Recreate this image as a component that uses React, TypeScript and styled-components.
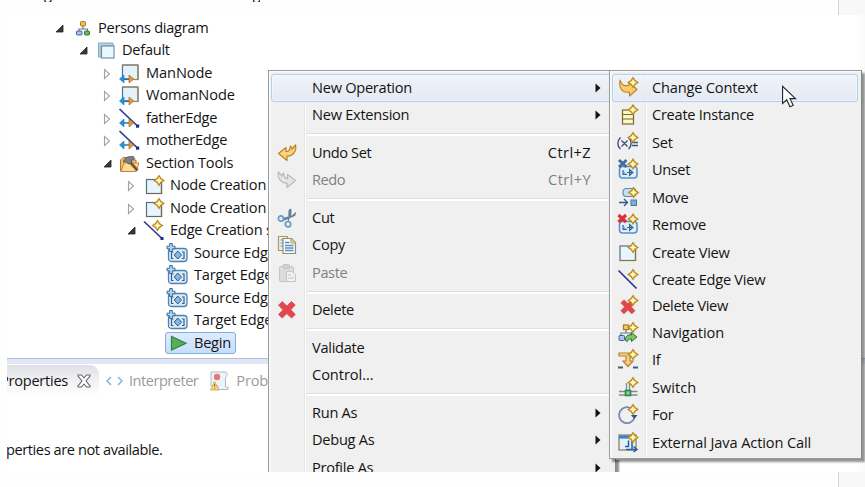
import React from "react";
import styled, { createGlobalStyle, css } from "styled-components";

const Global = createGlobalStyle`
  * { box-sizing: border-box; }
  body { margin: 0; background: #fefefe; overflow: hidden; }
`;

const Page = styled.div`
  position: relative;
  width: 865px;
  height: 487px;
  overflow: hidden;
  background: #fefefe;
  color: #141414;
  font: 14.6px/22px "Open Sans", "Noto Sans", sans-serif;
  letter-spacing: -0.27px;
  white-space: nowrap;
  display: flex;
  flex-direction: column;
`;

const Strip = styled.div`
  flex: none;
  height: 15px;
  display: flex;
  justify-content: space-between;
  overflow: hidden;
`;
const Caption = styled.div`
  display: flex;
  gap: 201px;
  height: 2px;
  overflow: hidden;
  padding-left: 44px;
  line-height: 20px;
  span { margin-top: -17px; }
`;
const Margin = styled.div`
  width: 27px;
  border-left: 1px solid #d4d4d4;
  background: #f8f8f8;
`;

const Shot = styled.div`
  flex: none;
  height: 457px;
  margin-left: 7px;
  display: flex;
  flex-direction: column;
  overflow: hidden;
  background: linear-gradient(to right, #fff 850px, #f9f9f9 858px);
`;

const Tree = styled.div`
  height: 343px;
  padding-top: 1.25px;
`;
const TreeRow = styled.div<{ $level: number }>`
  height: 22.5px;
  padding-left: ${(p) => 48 + p.$level * 24}px;
  display: flex;
  align-items: center;
`;
const Twisty = styled.svg`
  width: 10px;
  height: 22px;
  flex: none;
  margin-right: 5px;
  overflow: visible;
`;
const TreeIcon = styled.svg`
  width: 25px;
  height: 22px;
  flex: none;
  overflow: visible;
`;
const TreeText = styled.span<{ $ls?: number }>`
  margin: 0 0 2px 3px;
  letter-spacing: ${(p) => p.$ls ?? -0.27}px;
`;
const Selected = styled.div`
  display: flex;
  align-items: center;
  height: 22px;
  width: 71px;
  margin-left: -1px;
  border: 1px solid #84acdd;
  border-radius: 3px;
  background: linear-gradient(#deebfd, #c6defc);
`;

const TabBar = styled.div`
  flex: none;
  height: 39px;
  border-top: 1px solid #b4bdd6;
  box-shadow: inset 0 5px #e1e6f6;
  padding-top: 6px;
  display: flex;
`;
const TabText = styled.span`
  margin-bottom: 2px;
`;
const ActiveTab = styled.div`
  width: 92px;
  flex: none;
  height: 32px;
  padding: 0 8px 0 0;
  display: flex;
  align-items: center;
  justify-content: flex-end;
  gap: 9px;
  border-top-right-radius: 9px;
  background: linear-gradient(#dfe0e5, #f2f2f4 50%, #fff);
  svg { flex: none; }
`;
const Tab = styled.div<{ $left: number; $gap: number; $ls: number }>`
  height: 32px;
  margin-left: ${(p) => p.$left}px;
  display: flex;
  align-items: center;
  gap: ${(p) => p.$gap}px;
  color: #9b9b9b;
  letter-spacing: ${(p) => p.$ls}px;
  svg { flex: none; }
`;
const PaneText = styled.div`
  margin: 41px 0 0 -1px;
  letter-spacing: -0.42px;
`;

const MenuLayer = styled.div<{ $x: number; $w: number; $h: number; $shadow?: boolean }>`
  position: absolute;
  left: ${(p) => p.$x}px;
  top: 70px;
  width: ${(p) => p.$w}px;
  height: ${(p) => p.$h}px;
  overflow: hidden;
  padding: 3px 3px 0 2px;
  border: 1px solid #9c9c9c;
  ${(p) => !p.$shadow && css`border-bottom: none;`}
  border-right-color: #858585;
  background: linear-gradient(to right, #f7f7f7 2px, #f0f0f0 2px, #f0f0f0 35px, #e4e4e4 35px, #e4e4e4 36px, #fcfcfc 36px, #fcfcfc 37px, #f0f0f0 37px);
  box-shadow: inset 1px 1px #fafafa ${(p) => p.$shadow ? ", 3px 3px 2px rgba(0,0,0,.42)" : ""};
`;
const MenuShade = styled.div`
  position: absolute;
  left: 615px;
  top: 460px;
  width: 5px;
  height: 12px;
  background: linear-gradient(to right, #858585, #9a9a9a 60%, #ededed);
`;
const MenuRow = styled.div<{ $h?: number; $hot?: boolean; $off?: boolean }>`
  height: ${(p) => p.$h ?? 27.5}px;
  padding: 0 10px 0 4.5px;
  display: flex;
  align-items: center;
  border: 1px solid transparent;
  border-radius: 3px;
  color: ${(p) => (p.$off ? "#808080" : "#141414")};
  ${(p) => p.$hot && css`
    border-color: #aecff7;
    background: linear-gradient(rgba(240,243,248,.85), rgba(226,233,244,.85));
    box-shadow: inset 0 0 0 1px rgba(255,255,255,.45);
  `}
`;
const MenuIcon = styled.svg`
  width: 20px;
  height: 20px;
  flex: none;
  overflow: visible;
`;
const MenuText = styled.span<{ $ls?: number; $indent: number }>`
  flex: 1;
  margin: 0 0 2px ${(p) => p.$indent}px;
  letter-spacing: ${(p) => p.$ls ?? -0.27}px;
`;
const Shortcut = styled.span`
  margin: 0 10px 2px 0;
  letter-spacing: 0.4px;
`;
const Rule = styled.div`
  height: 10px;
  margin-left: 36px;
  padding-top: 4px;
  &::before {
    content: "";
    display: block;
    height: 2px;
    border-top: 1px solid #dedede;
    background: #fff;
  }
`;
const SubArrow = styled.svg`
  width: 6px;
  height: 10px;
  flex: none;
`;
const Pointer = styled.svg`
  position: absolute;
  left: 781px;
  top: 85px;
  width: 17px;
  height: 24px;
`;

const Star = ({ x, y }: { x: number; y: number }) => (
  <g transform={`translate(${x} ${y})`}>
    <path d="M0-4.800 1.900-1.900 4.800 0 1.900 1.900 0 4.800-1.900 1.900-4.800 0-1.900-1.900Z" fill="#fbe38a" stroke="#b98a1c" strokeWidth="1.300" />
    <path d="M0-2.200V2.200M-2.200 0H2.200" stroke="#fffbe0" strokeWidth="1" />
  </g>
);
const Link = ({ y }: { y: number }) => (
  <g transform={`translate(0 ${y})`}>
    <path d="M4 0H14" stroke="#3d6284" strokeWidth="1.4" />
    <path d="M6-4V4L1.5 0Z" fill="#1899de" stroke="#1478b8" strokeWidth=".6" />
    <path d="M11-4V4L15.8 0Z" fill="#e39a3c" stroke="#a96a20" strokeWidth=".7" />
  </g>
);
const CrossMark = () => (
  <path d="M5.2 1.6 9.8 6 14.4 1.6 18.2 5 13.8 9.8 18.2 14.4 14.6 18 9.8 13.6 5.2 18 1.6 14.4 6 9.8 1.6 5.2Z" fill="#e4474b" stroke="#d2555a" strokeWidth="1" strokeLinejoin="round" />
);

const treeIcons: Record<string, React.ReactNode> = {
  diagram: (
    <g>
      <path d="M13 8V12M9 15V12H17.500V15" fill="none" stroke="#6b7684" strokeWidth="1.1" />
      <rect x="10.500" y="4.500" width="5" height="4.500" rx="1" fill="#f3bd4a" stroke="#a87a18" />
      <rect x="6.500" y="14" width="5.500" height="4" rx="1" fill="#a9c4ee" stroke="#3f5f9e" />
      <rect x="14.500" y="14" width="5" height="4" rx="1" fill="#6cba62" stroke="#2b7738" />
    </g>
  ),
  layer: (
    <g>
      <path d="M4.500 4H19V7H7V18H4.500Z" fill="#b9d3e4" stroke="#8da9bb" />
      <rect x="7.500" y="7" width="12.500" height="12" fill="#eaf8fd" stroke="#6f93ad" strokeWidth="1.200" />
    </g>
  ),
  node: (
    <g>
      <rect x="4.500" y="3" width="15.500" height="14.500" fill="#e4f2fa" stroke="#55718c" strokeWidth="1.200" />
      <path d="M20 3V17.500H14M4.500 3H20" fill="none" stroke="#9d8b55" strokeWidth="1.200" />
      <Link y={17} />
    </g>
  ),
  edge: (
    <g>
      <path d="M1.500 2 20 19.500" stroke="#26389c" strokeWidth="1.700" />
      <rect x="18" y="17.500" width="3.200" height="3.200" fill="#1e2f88" />
      <Link y={16} />
    </g>
  ),
  tools: (
    <g>
      <path d="M2.500 19V8L5 5.500H9L11 8H18V19Z" fill="#f2bd67" stroke="#b9762a" />
      <path d="M3 19.500 6 11H21L18 19.500Z" fill="#ffdc94" stroke="#c1843a" />
      <path d="M11.500 9.500 19.500 18.500" stroke="#7c5638" strokeWidth="2.800" />
      <path d="M5.500 10C6 6 9.500 4 15.500 4.500L16.500 7 13.500 8 13.500 11 10.500 12 8.500 9.500Z" fill="#7b8084" stroke="#4c5155" strokeWidth=".8" />
    </g>
  ),
  create: (
    <g>
      <rect x="4.500" y="5.500" width="15" height="14" fill="#e8f5fc" stroke="#576f84" strokeWidth="1.200" />
      <path d="M19.500 6V19.500H5" fill="none" stroke="#6e684e" strokeWidth="1.200" />
      <Star x={17} y={6.500} />
    </g>
  ),
  createEdge: (
    <g>
      <path d="M2 2.500 20 19.500" stroke="#26389c" strokeWidth="1.600" />
      <rect x="18.500" y="18" width="3" height="3" fill="#1e2f88" />
      <Star x={15.500} y={6.500} />
    </g>
  ),
  variable: (
    <g>
      <rect x="2.500" y="6.500" width="18.500" height="13" rx="3" fill="#dcebf8" stroke="#4b83b8" strokeWidth="1.300" />
      <path d="M7.500 10H5.500V16.500H7.500M16 10H18V16.500H16" fill="none" stroke="#3a5f86" strokeWidth="1.200" />
      <path d="M11.800 9 15.500 13 11.800 17 8.200 13Z" fill="#86b7dd" stroke="#2f5f91" />
      <path d="M3.700 1.500H6.300V4.200H9V6.800H6.300V9.500H3.700V6.800H1V4.200H3.700Z" fill="#b6d8ee" stroke="#386d99" />
    </g>
  ),
  begin: <path d="M5.500 4.500V18L20 11.300Z" fill="#55ae58" stroke="#2f8045" strokeWidth="1.200" />,
};

const menuIcons: Record<string, React.ReactNode> = {
  undo: <path d="M18.500 2C20 8 16 13.500 10 13V17.500L1.500 10.500 9 4.500V8.500C13.500 9 13 4 13.500 3L15 6Z" fill="#fbd27b" stroke="#bb8225" strokeWidth="1.200" strokeLinejoin="round" />,
  redo: <path d="M1.500 2C0 8 4 13.500 10 13V17.500L18.500 10.500 10.500 4.500V8.500C6.500 9 7 4 6.500 3L5 6Z" fill="#e4e4e4" stroke="#bababa" strokeWidth="1.200" strokeLinejoin="round" />,
  cut: (
    <g fill="none">
      <path d="M11.500 13 12 2 14 1V9L18.500 4.500 18 7.500 8 12 5.500 10.500 11 9Z" fill="#71839c" stroke="#5b6f8b" strokeWidth=".7" />
      <circle cx="4" cy="10.500" r="2.700" stroke="#5f9bcd" strokeWidth="1.700" />
      <circle cx="11" cy="16.200" r="2.700" stroke="#5f9bcd" strokeWidth="1.700" />
    </g>
  ),
  copy: (
    <g>
      <path d="M1.500 1.500H10.500V15.500H1.500Z" fill="#e8eff4" stroke="#b59a55" strokeWidth="1.200" />
      <path d="M3.500 5H6M3.500 8H6M3.500 11H6" stroke="#6a94bd" strokeWidth="1.200" />
      <path d="M6 3.500H14.500L18.500 7.500V18.500H6Z" fill="#f5fafc" stroke="#8a8f7a" strokeWidth="1.200" />
      <path d="M14 3.500V8H18.500" fill="#f0d58c" stroke="#b59a55" />
      <path d="M8 7.500H12.500M8 10.500H16.500M8 13H16.500M8 15.500H16.500" stroke="#5f8fc0" strokeWidth="1.300" />
    </g>
  ),
  paste: (
    <g fill="#dcdcdc" stroke="#c5c5c5">
      <rect x="2.500" y="3.500" width="14" height="15" rx="1.500" />
      <rect x="6" y="1.500" width="6.500" height="4" rx="1" fill="#d0d0d0" />
      <path d="M9.500 8.500H15L18.500 12V18.500H9.500Z" fill="#f1f1f1" />
      <path d="M11 12H14M11 15H17" />
    </g>
  ),
  del: <CrossMark />,
  context: (
    <g>
      <path d="M2 2C4 8 6 8 11 7.500V4L19 11.500 11.500 18V14C5 15.500 .5 11 2 2Z" fill="#f9cd6a" stroke="#bb8225" strokeWidth="1.100" strokeLinejoin="round" />
      <Star x={15} y={4.500} />
    </g>
  ),
  instance: (
    <g>
      <rect x="4.500" y="5" width="11" height="14" fill="#fbf7c8" stroke="#75692f" strokeWidth="1.200" />
      <path d="M4.500 9.500H15.500M4.500 14H15.500" stroke="#75692f" strokeWidth="1.200" />
      <Star x={15} y={4.800} />
    </g>
  ),
  set: (
    <g fill="none" stroke="#3d5273" strokeWidth="1.400">
      <path d="M2.500 4.500C-1 8-1 13 2.500 16M10.500 4.500C14 8 14 13 10.500 16M3.500 7.500 9.500 13.500M9.500 7.500 3.500 13.500M14 9.500H20M14 12.500H20" />
      <Star x={15} y={4.500} />
    </g>
  ),
  unset: (
    <g>
      <rect x="1.500" y="6.500" width="17.500" height="11.500" rx="3" fill="#e2eef9" stroke="#5790c5" strokeWidth="1.500" />
      <path d="M5 10V14.500H9M9 12.500H14M11.500 9.500 15 12.500 11.500 15.500Z" fill="#8bb7df" stroke="#376695" strokeWidth="1.100" />
      <path d="M1 0 8.500 7M8.500 0 1 7" stroke="#3e6f9e" strokeWidth="3" />
      <Star x={15} y={4} />
    </g>
  ),
  move: (
    <g>
      <rect x="5" y=".5" width="13" height="8" rx="3.500" fill="#c8dff2" stroke="#5c86b6" strokeWidth="1.200" />
      <path d="M1 14.500H9M6 11 9.500 14.500 6 18" fill="none" stroke="#355890" strokeWidth="1.300" />
      <rect x="13" y="12" width="5.500" height="5.500" fill="#7faed0" stroke="#467da8" />
      <Star x={15.500} y={4.500} />
    </g>
  ),
  remove: (
    <g>
      <rect x="1.500" y="6.500" width="17.500" height="11.500" rx="3" fill="#e2eef9" stroke="#5790c5" strokeWidth="1.500" />
      <path d="M5 10V14.500H9M9 12.500H14M11.500 9.500 15 12.500 11.500 15.500Z" fill="#8bb7df" stroke="#376695" strokeWidth="1.100" />
      <path d="M.5 0 8 7M8 0 .5 7" stroke="#dc3038" strokeWidth="3.200" />
      <Star x={15} y={4} />
    </g>
  ),
  view: (
    <g>
      <rect x="2" y="3" width="15.500" height="14.500" fill="#e8f5fc" stroke="#576f84" strokeWidth="1.200" />
      <path d="M17.500 4V17.500H2" fill="none" stroke="#857442" strokeWidth="1.200" />
      <Star x={15} y={4.500} />
    </g>
  ),
  edgeView: (
    <g>
      <path d="M.5 .5 18.500 18.500" stroke="#26389c" strokeWidth="1.700" />
      <Star x={15} y={4.500} />
    </g>
  ),
  delView: (
    <g>
      <g transform="translate(1.500 2.500) scale(.85)"><CrossMark /></g>
      <Star x={15} y={4.500} />
    </g>
  ),
  navigation: (
    <g>
      <path d="M8 6V10M3 13V10H13V13" fill="none" stroke="#6b7684" strokeWidth="1.200" />
      <rect x="5.500" y="2" width="5" height="4.500" fill="#f6cf6c" stroke="#a87a18" strokeWidth="1.200" />
      <rect x="1" y="12.500" width="5.500" height="5" rx="1" fill="#a9c4ee" stroke="#3f5f9e" />
      <path d="M7.500 17.500C7 13 10 11.500 13.500 12V9.500L19 14 13.500 18.500V16C10.500 16 10 17 9.500 18.500Z" fill="#7cc667" stroke="#2b7738" />
      <Star x={15} y={4.500} />
    </g>
  ),
  iff: (
    <g>
      <path d="M1 3H12V11H15L10 16.500 5 11H8V6H1Z" fill="#f6d085" stroke="#b9812e" strokeWidth="1.200" />
      <path d="M0 17.500H5M15 17.500H20" stroke="#3f5f85" strokeWidth="2" />
      <Star x={15} y={4.500} />
    </g>
  ),
  switcher: (
    <g>
      <path d="M1 13.500H19.500M1 17H19.500M8.500 5V13M11.500 5V13" stroke="#818a8c" strokeWidth="1.300" />
      <rect x="7.500" y="12.500" width="5" height="5" fill="#8bd092" stroke="#28884a" strokeWidth="1.600" />
      <Star x={15} y={4.500} />
    </g>
  ),
  loop: (
    <g>
      <path d="M13.500 3.500A8 8 0 1 0 16.500 13" fill="none" stroke="#7889b0" strokeWidth="1.800" />
      <path d="M13 10H19.500L16.300 14Z" fill="#384f85" />
      <Star x={15} y={4.500} />
    </g>
  ),
  java: (
    <g>
      <rect x="1" y="2" width="17" height="15" fill="#e1f1fb" stroke="#8b7b4b" strokeWidth="1.200" />
      <path d="M1 4H18" stroke="#3b82cc" strokeWidth="3.200" />
      <path d="M10.500 7.500V13.500H7M14 8V16M8 16.500H18M15.500 13.500 19 16.500 15.500 19" fill="none" stroke="#315aa0" strokeWidth="1.500" />
      <Star x={15} y={4.500} />
    </g>
  ),
};

type TreeItem = { level: number; text: string; icon: string; state?: "open" | "closed"; selected?: boolean; ls?: number };
const tree: TreeItem[] = [
  { level: 0, text: "Persons diagram", icon: "diagram", state: "open" },
  { level: 1, text: "Default", icon: "layer", state: "open", ls: -0.27 },
  { level: 2, text: "ManNode", icon: "node", state: "closed", ls: -0.1 },
  { level: 2, text: "WomanNode", icon: "node", state: "closed", ls: -0.1 },
  { level: 2, text: "fatherEdge", icon: "edge", state: "closed", ls: -0.35 },
  { level: 2, text: "motherEdge", icon: "edge", state: "closed", ls: -0.27 },
  { level: 2, text: "Section Tools", icon: "tools", state: "open", ls: -0.2 },
  { level: 3, text: "Node Creation", icon: "create", state: "closed", ls: -0.2 },
  { level: 3, text: "Node Creation", icon: "create", state: "closed", ls: -0.2 },
  { level: 3, text: "Edge Creation s", icon: "createEdge", state: "open", ls: -0.2 },
  { level: 4, text: "Source Edge", icon: "variable", ls: -0.2 },
  { level: 4, text: "Target Edge", icon: "variable", ls: -0.2 },
  { level: 4, text: "Source Edge", icon: "variable", ls: -0.2 },
  { level: 4, text: "Target Edge", icon: "variable", ls: -0.2 },
  { level: 4, text: "Begin", icon: "begin", selected: true },
];

type Item = { text?: string; icon?: string; key?: string; off?: boolean; sub?: boolean; hot?: boolean; h?: number; ls?: number };
const mainMenu: Item[] = [
  { text: "New Operation", sub: true, hot: true },
  { text: "New Extension", sub: true },
  {},
  { text: "Undo Set", icon: "undo", key: "Ctrl+Z", ls: -0.4 },
  { text: "Redo", icon: "redo", key: "Ctrl+Y", off: true, ls: -0.5 },
  {},
  { text: "Cut", icon: "cut" },
  { text: "Copy", icon: "copy" },
  { text: "Paste", icon: "paste", off: true, ls: -0.4 },
  {},
  { text: "Delete", icon: "del", ls: -0.35 },
  {},
  { text: "Validate" },
  { text: "Control...", ls: -0.05 },
  {},
  { text: "Run As", sub: true },
  { text: "Debug As", sub: true },
  { text: "Profile As", sub: true },
];
const operationMenu: Item[] = [
  { text: "Change Context", icon: "context", hot: true, ls: -0.18 },
  { text: "Create Instance", icon: "instance" },
  { text: "Set", icon: "set" },
  { text: "Unset", icon: "unset", ls: -0.4 },
  { text: "Move", icon: "move" },
  { text: "Remove", icon: "remove", ls: -0.15 },
  { text: "Create View", icon: "view", ls: -0.27 },
  { text: "Create Edge View", icon: "edgeView", h: 26, ls: -0.27 },
  { text: "Delete View", icon: "delView", h: 26.5, ls: -0.35 },
  { text: "Navigation", icon: "navigation", ls: -0.05 },
  { text: "If", icon: "iff" },
  { text: "Switch", icon: "switcher", ls: 0 },
  { text: "For", icon: "loop" },
  { text: "External Java Action Call", icon: "java", ls: -0.12 },
];

const MenuItems = ({ items, indent }: { items: Item[]; indent: number }) => (
  <>
    {items.map((it, i) =>
      it.text ? (
        <MenuRow key={i} $h={it.h} $hot={it.hot} $off={it.off}>
          <MenuIcon viewBox="0 0 20 20">{it.icon && menuIcons[it.icon]}</MenuIcon>
          <MenuText $ls={it.ls} $indent={indent}>{it.text}</MenuText>
          {it.key && <Shortcut>{it.key}</Shortcut>}
          {it.sub && <SubArrow viewBox="0 0 6 10"><path d="M.5 .5V9.500L5.500 5Z" fill="#141414" /></SubArrow>}
        </MenuRow>
      ) : (
        <Rule key={i} />
      )
    )}
  </>
);

const TreeLabel = ({ item }: { item: TreeItem }) => (
  <>
    <TreeIcon viewBox="0 0 25 22">{treeIcons[item.icon]}</TreeIcon>
    <TreeText $ls={item.ls}>{item.text}</TreeText>
  </>
);

export default function App() {
  return (
    <>
      <Global />
      <Page>
        <Strip>
          <Caption><span>g</span><span>g</span></Caption>
          <Margin />
        </Strip>
        <Shot>
          <Tree>
            {tree.map((item, i) => (
              <TreeRow key={i} $level={item.level}>
                <Twisty viewBox="0 0 10 22">
                  {item.state === "open" && <path d="M8 8V15H1Z" fill="#3a3a3a" stroke="#222" strokeWidth=".8" />}
                  {item.state === "closed" && <path d="M1.500 7.500V16.500L6.500 12Z" fill="#fff" stroke="#a2a2a2" strokeWidth="1.100" />}
                </Twisty>
                {item.selected ? <Selected><TreeLabel item={item} /></Selected> : <TreeLabel item={item} />}
              </TreeRow>
            ))}
          </Tree>
          <TabBar>
            <ActiveTab>
              <TabText>Properties</TabText>
              <svg width="14" height="14" viewBox="0 0 14 14">
                <path d="M1 1H4.500L7 4 9.500 1H13V2L9 7 13 12V13H9.500L7 10 4.500 13H1V12L5 7 1 2Z" fill="#fff" stroke="#666" strokeWidth="1.100" />
              </svg>
            </ActiveTab>
            <Tab $left={7} $gap={6} $ls={-0.5}>
              <svg width="17" height="10" viewBox="0 0 17 10">
                <path d="M5 1 1 5 5 9M12 1 16 5 12 9" fill="none" stroke="#81b7dc" strokeWidth="1.500" />
              </svg>
              <TabText>Interpreter</TabText>
            </Tab>
            <Tab $left={12} $gap={7} $ls={-0.2}>
              <svg width="19" height="20" viewBox="0 0 19 20">
                <path d="M1 1H16C18 3 17 6 15.500 6.500V16H18V18.500H8V15H1Z" fill="#edf3f8" stroke="#a9bfd0" />
                <circle cx="7" cy="6" r="3.200" fill="#e67878" />
                <path d="M4.500 10.500 9 19H.5Z" fill="#f9d98e" stroke="#d9a957" />
                <path d="M4.700 13V16M4.700 17V18" stroke="#8a6a30" />
              </svg>
              <TabText>Prob</TabText>
            </Tab>
          </TabBar>
          <PaneText>perties are not available.</PaneText>
        </Shot>
        <Strip>
          <Caption />
          <Margin />
        </Strip>
        <MenuLayer $x={268} $w={348} $h={402}><MenuItems items={mainMenu} indent={15.5} /></MenuLayer>
        <MenuShade />
        <MenuLayer $x={609} $w={253} $h={389} $shadow><MenuItems items={operationMenu} indent={14.5} /></MenuLayer>
        <Pointer viewBox="0 0 18 26">
          <path d="M1.500 1.500V20L6 16 9.500 23.500 13 22 9.500 14.800H15.500Z" fill="#fff" stroke="#20242e" strokeWidth="1.200" />
        </Pointer>
      </Page>
    </>
  );
}
